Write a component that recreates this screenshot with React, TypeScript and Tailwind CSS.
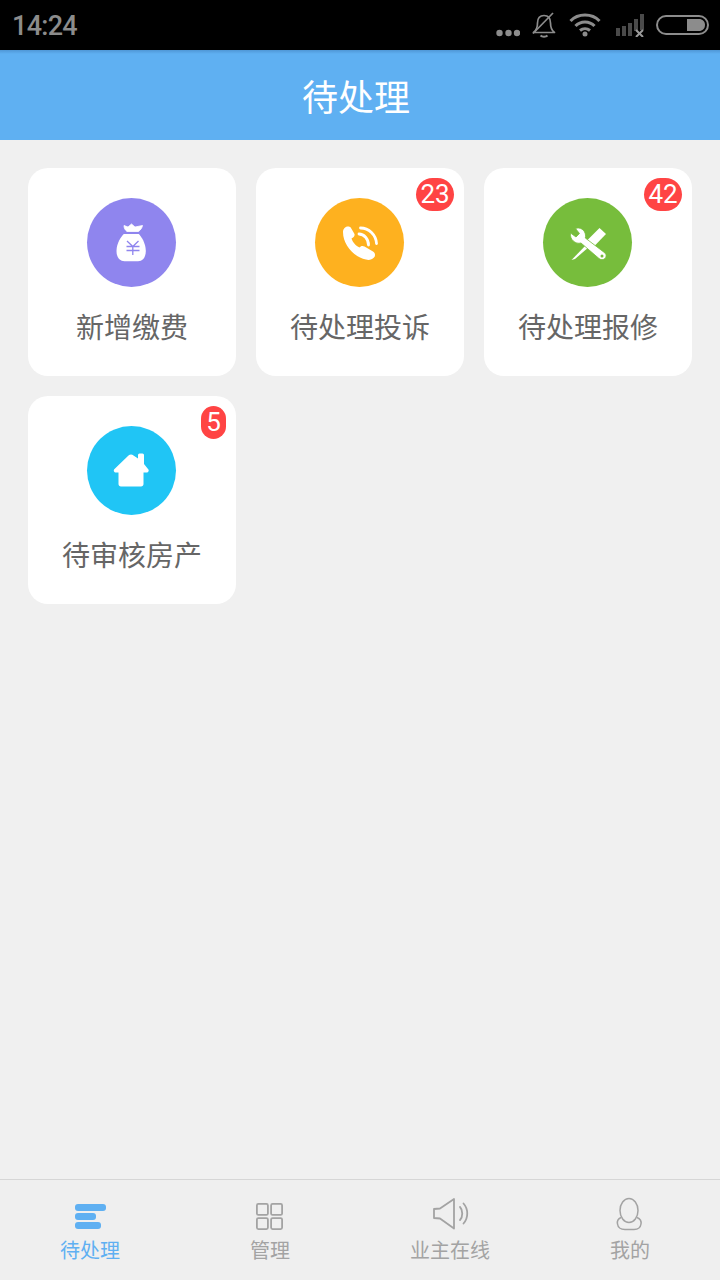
const cjk = '"Noto Sans CJK SC", "Noto Sans", sans-serif';

const MoneyIcon = () => (
  <svg width="40" height="44" viewBox="0 0 40 44">
    <path d="M12 4.500 L16 6 L19.500 3 L23 6 L30.500 4.500 C30 7 28.500 9 26.500 10.500 L15 10.500 C13 9 12 7 12 4.500 Z" fill="#fff" stroke="#fff" strokeWidth="0.800" strokeLinejoin="round" />
    <path d="M11.800 13 L26.800 13 C29 15 33.800 22 33.800 30 C33.800 36 31 40.200 26 40.200 L12.500 40.200 C7.500 40.200 4.500 36 4.500 30 C4.500 22 9.500 15 11.800 13 Z" fill="#fff" />
    <path d="M15 20 L20.800 25.500 M26.500 20 L20.800 25.500 M14.500 25.500 L27.500 25.500 M14.500 29.500 L27.500 29.500 M20.800 25.500 L20.800 34" stroke="#8f85ee" strokeWidth="1.300" fill="none" />
  </svg>
);

const PhoneIcon = () => (
  <svg width="40" height="40" viewBox="0 0 40 40">
    <path d="M3 9 C3 6 5 3.500 8 3.500 C9.500 3.500 10.500 4 11 5 L14.500 11 C15 13 13.500 14.500 11.500 15.500 C12.500 19 16 23 19.500 24.500 C20.500 23 22.500 22.500 24.500 23.500 L33 28.500 C35.500 30 35.500 33 34 34.500 C32 36.500 29 37.500 26 36.500 C14 34 3 22 3 9 Z" fill="#fff" />
    <path d="M20.500 5 C29 5 36 12 36.500 20.500" stroke="#fff" strokeWidth="2.800" fill="none" strokeLinecap="round" />
    <path d="M19 11 C24 11 28.500 16 28.500 22" stroke="#fff" strokeWidth="2.800" fill="none" strokeLinecap="round" />
  </svg>
);

const ToolsIcon = () => (
  <svg width="40" height="40" viewBox="0 0 40 40">
    <path d="M3.500 37 L19 21 L21.500 23.500 L7 36 Z" fill="#fff" />
    <path d="M31.500 5 L38 11 L24.500 25 L17.500 19 Z" fill="#fff" />
    <path d="M2.500 10 L8 14 L11.500 10.500 L7.500 5.500 C12 3.500 17 7 17.500 12 C17.700 13 17.500 14 17.300 15 L37 30 C38.500 31.500 38.500 34 37 35.500 C35.500 37 32.500 37 31 35.500 L13 20 C7.500 21.500 1.500 16.500 2.500 10 Z" fill="#fff" stroke="#77bd3c" strokeWidth="0.800" />
    <circle cx="34" cy="33" r="1.500" fill="#77bd3c" />
  </svg>
);

const HouseIcon = () => (
  <svg width="40" height="40" viewBox="0 0 40 40">
    <path d="M26 7.500 L26 4 Q26 2.500 27.500 2.500 L30.500 2.500 Q32 2.500 32 4 L32 13 L36 18 C37.500 19.500 36.500 21.500 34.500 21.500 L31.500 21.500 L31.500 33 C31.500 34.500 30.500 35.500 29 35.500 L9 35.500 C7.500 35.500 6.500 34.500 6.500 33 L6.500 21.500 L4 21.500 C2 21.500 1 19.500 2.500 18 L16.500 4.500 C18 3 20 3 21.500 4.500 Z" fill="#fff" />
  </svg>
);

const cards = [
  { label: '新增缴费', color: 'bg-[#8f85ee]', icon: <MoneyIcon /> },
  { label: '待处理投诉', color: 'bg-[#feb11f]', icon: <PhoneIcon />, badge: '23' },
  { label: '待处理报修', color: 'bg-[#77bd3c]', icon: <ToolsIcon />, badge: '42' },
  { label: '待审核房产', color: 'bg-[#20c5f5]', icon: <HouseIcon />, badge: '5' },
];

const Card = ({ label, color, icon, badge }: { label: string; color: string; icon: React.ReactNode; badge?: string }) => (
  <div className="relative flex h-[208px] w-[208px] flex-col items-center rounded-[20px] bg-white pt-[30px]">
    <div className={`mr-[1px] flex h-[89px] w-[89px] items-center justify-center rounded-full ${color}`}>{icon}</div>
    <div className="mt-[19px] text-[28px] leading-[40px] text-[#666666]">{label}</div>
    {badge && (
      <div
        className={`absolute right-[10px] top-[10px] flex h-[33px] items-center justify-center rounded-full bg-[#ff4444] text-[26px] text-white ${
          badge.length > 1 ? 'w-[38px]' : 'w-[25px]'
        }`}
        style={{ fontFamily: 'Roboto, sans-serif' }}
      >
        {badge}
      </div>
    )}
  </div>
);

const StatusIcons = () => (
  <div className="flex items-center pr-[11px]">
    {/* dots */}
    <svg width="24" height="36" viewBox="0 0 24 36" fill="#8c8c8c" className="mt-[14px]">
      <circle cx="3.500" cy="19" r="3.200" />
      <circle cx="12.500" cy="19" r="3.200" />
      <circle cx="21" cy="19" r="3.200" />
    </svg>
    {/* bell muted */}
    <svg width="24" height="26" viewBox="0 0 24 26" fill="none" stroke="#8c8c8c" className="ml-[12px]">
      <path d="M1.500 20.500 C5 18 5.500 15 5.500 11 C5.500 6 8 3.500 12 3.500 C16 3.500 18.500 6 18.500 11 C18.500 15 19 18 22.500 20.500 Z" strokeWidth="1.700" strokeLinejoin="round" />
      <path d="M8.500 23.500 C10 25 14 25 15.500 23.500" strokeWidth="2" />
      <path d="M1 21.500 L21 1" strokeWidth="1.700" />
    </svg>
    {/* wifi */}
    <svg width="32" height="24" viewBox="0 0 32 24" fill="none" stroke="#8c8c8c" strokeWidth="3" className="ml-[13px]">
      <path d="M1.500 8 C9 0 23 0 30.500 8" />
      <path d="M6.500 13 C11.500 7.500 20.500 7.500 25.500 13" />
      <path d="M11 17.500 C14 15 18 15 21 17.500" />
      <circle cx="16" cy="21" r="2.500" fill="#8c8c8c" stroke="none" />
    </svg>
    {/* signal */}
    <svg width="30" height="24" viewBox="0 0 30 24" className="ml-[14px]">
      <rect x="1" y="15" width="4" height="8" fill="#4a4a4a" />
      <rect x="7" y="13" width="4" height="10" fill="#4a4a4a" />
      <rect x="13" y="10" width="4" height="13" fill="#4a4a4a" />
      <rect x="19" y="6" width="4" height="12" fill="#4a4a4a" />
      <rect x="25" y="1" width="4" height="16" fill="#4a4a4a" />
      <path d="M21 17 L28 24 M28 17 L21 24" stroke="#9a9a9a" strokeWidth="2" />
    </svg>
    {/* battery */}
    <svg width="53" height="20" viewBox="0 0 53 20" className="ml-[11px]">
      <rect x="1" y="1" width="51" height="18" rx="9" fill="none" stroke="#8c8c8c" strokeWidth="2" />
      <path d="M31 4 L43 4 C46.500 4 49 6.500 49 10 C49 13.500 46.500 16 43 16 L31 16 Z" fill="#8c8c8c" />
    </svg>
  </div>
);

const tabs = [
  {
    label: '待处理',
    active: true,
    icon: (
      <svg width="40" height="36" viewBox="0 0 40 36">
        <rect x="5" y="8" width="31" height="7" rx="3" fill="#5fb0f2" />
        <rect x="5" y="17" width="21" height="7" rx="3" fill="#5fb0f2" />
        <rect x="5" y="26" width="26" height="7" rx="3" fill="#5fb0f2" />
      </svg>
    ),
  },
  {
    label: '管理',
    icon: (
      <svg width="40" height="36" viewBox="0 0 40 36" fill="none" stroke="#a3a3a3" strokeWidth="1.800">
        <rect x="6.900" y="7.900" width="11" height="11" rx="1.500" />
        <rect x="21.100" y="7.900" width="11" height="11" rx="1.500" />
        <rect x="6.900" y="22.100" width="11" height="11" rx="1.500" />
        <rect x="21.100" y="22.100" width="11" height="11" rx="1.500" />
      </svg>
    ),
  },
  {
    label: '业主在线',
    icon: (
      <svg width="40" height="36" viewBox="0 0 40 36" fill="none" stroke="#a3a3a3" strokeWidth="1.800" strokeLinejoin="round" strokeLinecap="round">
        <path d="M24 3 L24 32.500 L10 22.500 L4 22 L4 13 L10 12.500 Z" />
        <path d="M30 11 C33 14 33 21 30 24" />
        <path d="M33.500 7.500 C38.500 13 38.500 22 33.500 27.500" />
      </svg>
    ),
  },
  {
    label: '我的',
    icon: (
      <svg width="40" height="36" viewBox="0 0 40 36" fill="none" stroke="#a3a3a3" strokeWidth="1.500">
        <ellipse cx="19" cy="14.500" rx="9" ry="12" />
        <path d="M11 21.500 C7.500 23 7 25.500 7.500 28 C8 31.500 11 33.500 15 33.500 L24 33.500 C27.500 33.500 30.500 31.500 31 28 C31.500 25.500 30.500 23 27 21.500" />
      </svg>
    ),
  },
];

export default function App() {
  return (
    <div className="flex h-[1280px] w-[720px] flex-col bg-[#f0f0f0]" style={{ fontFamily: cjk }}>
      {/* status bar */}
      <div className="flex h-[50px] items-center justify-between bg-black pl-[12px]">
        <span className="mt-[2px] text-[27px] font-medium leading-none tracking-[-0.7px] text-[#8c8c8c]" style={{ fontFamily: 'Roboto, sans-serif' }}>
          14:24
        </span>
        <StatusIcons />
      </div>

      <div className="flex h-[90px] items-center justify-center bg-[linear-gradient(#4f97d6,#5fb0f2_4px)] pr-[8px] text-[36px] text-white">待处理</div>

      <div className="grid flex-1 grid-cols-[208px_208px_208px] content-start gap-[20px] pl-[28px] pt-[28px]">
        {cards.map((c) => (
          <Card key={c.label} {...c} />
        ))}
      </div>

      <div className="flex h-[101px] border-t border-[#d6d6d6] bg-[#efefef]">
        {tabs.map((t) => (
          <div key={t.label} className="flex w-[180px] flex-col items-center pt-[16px]">
            {t.icon}
            <span className={`mt-[4px] text-[20px] leading-[28px] ${t.active ? 'text-[#5fb0f2]' : 'text-[#a3a3a3]'}`}>{t.label}</span>
          </div>
        ))}
      </div>
    </div>
  );
}
